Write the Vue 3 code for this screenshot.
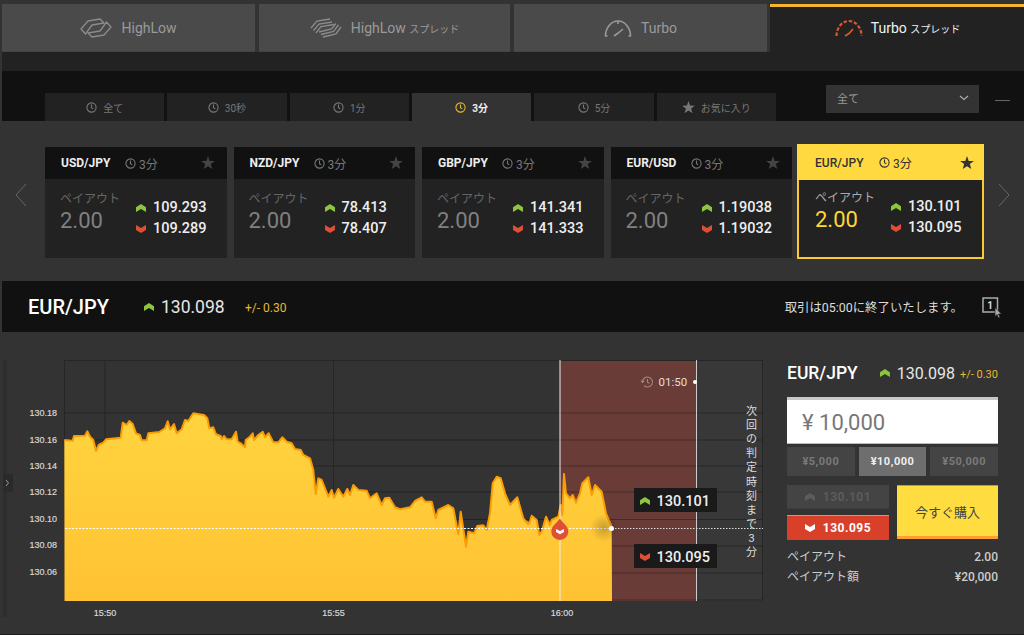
<script setup>
const up = 'M0 3.2 5 0l5 3.2V8L5 5 0 8Z'
const down = 'M0 0l5 3 5-3v5L5 8 0 5Z'
const star = 'M7 0l1.7 4.9 5.2.1-4.1 3.1 1.5 5L7 10.2 2.7 13.1l1.5-5L.1 5l5.2-.1Z'

const subTabs = [
  { label: '全て' }, { label: '30秒' }, { label: '1分' },
  { label: '3分', active: true }, { label: '5分' }, { label: 'お気に入り', fav: true }
]
const cards = [
  { pair: 'USD/JPY', hi: '109.293', lo: '109.289' },
  { pair: 'NZD/JPY', hi: '78.413', lo: '78.407' },
  { pair: 'GBP/JPY', hi: '141.341', lo: '141.333' },
  { pair: 'EUR/USD', hi: '1.19038', lo: '1.19032' },
  { pair: 'EUR/JPY', hi: '130.101', lo: '130.095', active: true }
]
const amounts = [
  { label: '¥5,000' }, { label: '¥10,000', active: true }, { label: '¥50,000' }
]

const seg1 = [193,270,218,272,222,258,255,257,262,244,270,260,280,270,288,303,296,285,310,278,318,268,362,263,368,218,380,225,388,213,398,222,408,250,420,255,425,271,440,271,445,250,478,246,495,235,503,214,510,238,522,222,530,250,545,238,555,210,565,213,580,190,612,195,622,205,628,235,640,232,648,253,662,258,665,268,672,258,680,268,695,268,708,245,713,275,722,280,735,292,737,270,748,262,758,250,762,270,775,255,788,245,795,262,806,250]
const seg2 = [0,108,10,127,25,127,37,112,50,125,65,130,75,147,92,150,100,165,120,175,130,210,137,282,145,235,155,240,175,290,185,270,192,293,205,267,220,290,232,267,240,285,250,255,265,270,290,272,300,295,320,280,335,315,345,295,358,293,375,322,390,328,420,322,435,303,455,292,465,305,485,305,497,355,505,330,535,315,550,325,565,403,572,335,588,440,595,395,612,400,622,378,640,376,650,390,660,340,668,250,680,230,692,235,705,280,720,315,742,292,760,355,775,372]
const seg3 = [15,512,28,520,35,497,50,510,58,555,65,545,78,500,90,525,95,510,115,500,122,465,127,495,132,372,138,430,150,445,158,435,168,458,180,430,187,400,205,382,215,435,225,405,245,425,258,490,275,530]
const pts = []
for (let i = 0; i < seg1.length; i += 2) pts.push([seg1[i] / 3, 350 + seg1[i + 1] / 3])
for (let i = 0; i < seg2.length; i += 2) pts.push([270 + seg2[i] / 3, 400 + seg2[i + 1] / 3])
for (let i = 0; i < seg3.length; i += 2) pts.push([520 + seg3[i] / 3, 350 + seg3[i + 1] / 3])
const line = pts.map(p => p[0].toFixed(1) + ',' + p[1].toFixed(1)).join(' ')
const area = '64.5,601 ' + line + ' 612,601'

const gridY = [413, 440, 466, 492, 519.5, 546, 573, 600]
const labels = [
  ['130.18', 416], ['130.16', 443], ['130.14', 469], ['130.12', 495],
  ['130.10', 522], ['130.08', 548], ['130.06', 575]
]
const times = [['15:50', 105], ['15:55', 333.5], ['16:00', 562]]
const vertical = ['次', '回', 'の', '判', '定', '時', '刻', 'ま', 'で', '3', '分']
</script>

<template>
  <div class="page">
    <nav class="top-tabs">
      <div class="top-tab">
        <svg class="ic" width="32" height="20" viewBox="0 0 32 20" fill="none" stroke="#8c8c8c" stroke-width="1.300" stroke-linejoin="round">
          <path d="M5.500 16 1 11l7-8 12-2 4 4-12 2Z" />
          <path d="M26.500 4 31 9l-7 8-12 2-4-4 12-2Z" />
        </svg>
        <span>HighLow</span>
      </div>
      <div class="top-tab">
        <svg class="ic" width="32" height="20" viewBox="0 0 32 20" fill="none" stroke="#8c8c8c" stroke-width="1.300">
          <path d="M1 10 7 3 20 1M3.500 12.500 9 6 22 4M6 15l5-6.500 13-2" />
          <path d="M31 9l-5 7-13 3M28.500 7l-5 6.500L11 16.500M26 5.500 21.500 11 9 14" />
        </svg>
        <span>HighLow <small>スプレッド</small></span>
      </div>
      <div class="top-tab">
        <svg class="ic" width="28" height="18" viewBox="0 0 28 18" fill="none" stroke="#999" stroke-width="1.600">
          <path d="M3.500 17H1.500C1.500 9 7 2 14 2s12.500 7 12.500 15h-2" />
          <path d="M14 2v3M19 10l-5.500 4.500L10 17" />
        </svg>
        <span>Turbo</span>
      </div>
      <div class="top-tab on">
        <svg class="ic" width="28" height="18" viewBox="0 0 28 18" fill="none" stroke="#e2562c" stroke-width="2.200">
          <path d="M1.500 17C1.500 9 7 2 14 2s12.500 7 12.500 15" stroke-dasharray="3.500 1.800" />
          <path d="M18 10l-4 4.500-4 2.500" stroke-width="1.700" />
        </svg>
        <span>Turbo <small>スプレッド</small></span>
      </div>
    </nav>

    <div class="spacer"></div>

    <div class="filter-bar">
      <div class="sub-tabs">
        <div v-for="t in subTabs" :key="t.label" class="sub-tab" :class="{ on: t.active }">
          <svg v-if="t.fav" width="13" height="13" viewBox="0 0 14 14"><path :d="star" fill="#777" /></svg>
          <svg v-else width="11" height="11" viewBox="0 0 12 12" fill="none" :stroke="t.active ? '#e8b62c' : '#777'" stroke-width="1.200">
            <circle cx="6" cy="6" r="5" /><path d="M6 2.800V6.300L8 7.500" />
          </svg>
          <span>{{ t.label }}</span>
        </div>
      </div>
      <div class="select">
        <span>全て</span>
        <svg width="10" height="6" viewBox="0 0 10 6" fill="none" stroke="#aaa" stroke-width="1.300"><path d="M1 1l4 3.500L9 1" /></svg>
      </div>
      <div class="dash"></div>
    </div>

    <section class="cards">
      <svg class="nav-arrow" width="12" height="24" viewBox="0 0 12 24" fill="none" stroke="#666" stroke-width="1"><path d="M11 1 1 12l10 11" /></svg>
      <div class="card-row">
        <article v-for="c in cards" :key="c.pair" class="card" :class="{ on: c.active }">
          <header class="card-head">
            <b class="pair">{{ c.pair }}</b>
            <span class="dur">
              <svg width="11" height="11" viewBox="0 0 12 12" fill="none" stroke="currentColor" stroke-width="1.200">
                <circle cx="6" cy="6" r="5" /><path d="M6 2.800V6.300L8 7.500" />
              </svg>
              3分
            </span>
            <svg class="star" width="14" height="14" viewBox="0 0 14 14"><path :d="star" /></svg>
          </header>
          <div class="card-body">
            <div class="payout">
              <div class="payout-label">ペイアウト</div>
              <div class="payout-value">2.00</div>
            </div>
            <div class="prices">
              <div class="price"><svg width="10" height="8" viewBox="0 0 10 8"><path :d="up" fill="#8cc63f" /></svg>{{ c.hi }}</div>
              <div class="price"><svg width="10" height="8" viewBox="0 0 10 8"><path :d="down" fill="#e04e35" /></svg>{{ c.lo }}</div>
            </div>
          </div>
        </article>
      </div>
      <svg class="nav-arrow" width="12" height="24" viewBox="0 0 12 24" fill="none" stroke="#666" stroke-width="1"><path d="M1 1l10 11L1 23" /></svg>
    </section>

    <section class="info">
      <h1>EUR/JPY</h1>
      <svg width="10" height="8" viewBox="0 0 10 8"><path :d="up" fill="#8cc63f" /></svg>
      <span class="info-rate">130.098</span>
      <span class="info-diff">+/- 0.30</span>
      <span class="info-end">取引は05:00に終了いたします。</span>
      <svg class="one-click" width="20" height="23" viewBox="0 0 20 23">
        <path d="M1 2h14.500v14H1Z" fill="none" stroke="#aaa" stroke-width="1.500" />
        <text x="8" y="13" text-anchor="middle" class="one-num">1</text>
        <path d="M13 11.500v9l2-2 1.500 3.500 1.500-.7-1.500-3.300h3Z" fill="#aaa" stroke="#111" stroke-width=".6" />
      </svg>
    </section>

    <section class="trade">
      <svg class="chart" width="770" height="303" viewBox="0 332 770 303">
        <defs>
          <linearGradient id="fillG" x1="0" y1="0" x2="0" y2="1">
            <stop offset="0" stop-color="#ffd43f" />
            <stop offset="1" stop-color="#ffc233" />
          </linearGradient>
          <radialGradient id="glow">
            <stop offset="0" stop-color="#000" stop-opacity=".22" />
            <stop offset="1" stop-color="#000" stop-opacity="0" />
          </radialGradient>
        </defs>
        <rect x="3" y="360" width="4" height="257" fill="#2d2d2d" />
        <rect x="3" y="474" width="10" height="18" fill="#2a2a2a" />
        <path d="M6 480l2.500 3-2.500 3" fill="none" stroke="#999" stroke-width="1" />

        <rect x="560" y="360" width="137" height="241" fill="#693c37" />
        <rect x="697" y="360" width="66" height="241" fill="#383838" />
        <path v-for="y in gridY" :key="y" :d="`M65 ${y}H763`" stroke="#000" stroke-opacity=".3" stroke-width="1" />
        <path d="M65 360.500H763M64.500 360V601M105 360V601M333.500 360V601M762.500 360V601" stroke="#262626" stroke-width="1" fill="none" />

        <polygon :points="area" fill="url(#fillG)" />
        <polyline :points="line" fill="none" stroke="#fb9c05" stroke-width="2" stroke-linejoin="round" />

        <path d="M560 360V601" stroke="#eee" stroke-width="1" />
        <path d="M696.500 360V601" stroke="#ccc" stroke-width="1" />
        <path d="M65 528.500H612" stroke="#fff" stroke-width="1.200" stroke-dasharray="2 1.500" />
        <path d="M612 528.500H763" stroke="#ddd" stroke-width="1" stroke-dasharray="1.500 1.500" />
        <circle cx="604" cy="528" r="14" fill="url(#glow)" />
        <circle cx="611.500" cy="528.500" r="2.500" fill="#fff" />

        <path d="M559.800 518.500c3 5 8.500 7.500 8.500 13a8.400 8.400 0 0 1-17 0c0-5.500 5.500-8 8.500-13Z" fill="#e04e35" />
        <path d="M556 529l4 2 4-2v3l-4 2.300-4-2.300Z" fill="#fff" />

        <g class="ax">
          <text v-for="l in labels" :key="l[0]" x="57" :y="l[1]" text-anchor="end">{{ l[0] }}</text>
          <text v-for="t in times" :key="t[0]" :x="t[1]" y="616" text-anchor="middle">{{ t[0] }}</text>
        </g>

        <g fill="none" stroke="#a88" stroke-width="1.100">
          <path d="M642.500 382a5 5 0 1 1 1.500 3.600M647.500 379v3.200l2 1.200" />
          <path d="M641 380.500l1.500 2 1.700-1.800" />
        </g>
        <text x="658.500" y="386" class="timer">01:50</text>
        <circle cx="695" cy="382" r="2" fill="#fff" />

        <rect x="634" y="488" width="83" height="24" fill="#1a1a1a" />
        <path :d="up" fill="#8cc63f" transform="translate(640 497)" />
        <text x="656.500" y="505.500" class="tip">130.101</text>
        <rect x="634" y="544" width="83" height="24" fill="#1a1a1a" />
        <path :d="down" fill="#e04e35" transform="translate(640 553)" />
        <text x="656.500" y="561.500" class="tip">130.095</text>

        <text v-for="(c, i) in vertical" :key="i" x="751.500" :y="415 + i * 14.100" text-anchor="middle" class="vert">{{ c }}</text>
      </svg>

      <aside class="panel">
        <div class="panel-head">
          <h2>EUR/JPY</h2>
          <svg width="10" height="8" viewBox="0 0 10 8"><path :d="up" fill="#8cc63f" /></svg>
          <span class="panel-rate">130.098</span>
          <span class="panel-diff">+/- 0.30</span>
        </div>
        <div class="amount-input">¥ 10,000</div>
        <div class="amounts">
          <div v-for="a in amounts" :key="a.label" class="amount" :class="{ on: a.active }">{{ a.label }}</div>
        </div>
        <div class="actions">
          <div class="dirs">
            <div class="dir hi">
              <svg width="10" height="8" viewBox="0 0 10 8"><path :d="up" fill="#5c5c5c" /></svg>130.101
            </div>
            <div class="dir lo">
              <svg width="10" height="8" viewBox="0 0 10 8"><path :d="down" fill="#fff" /></svg>130.095
            </div>
          </div>
          <div class="buy">今すぐ購入</div>
        </div>
        <div class="row"><span>ペイアウト</span><b>2.00</b></div>
        <div class="row"><span>ペイアウト額</span><b>¥20,000</b></div>
      </aside>
    </section>
  </div>
</template>

<style>
html, body { margin: 0; background: #333; }
</style>

<style scoped>
.page {
  width: 1024px;
  height: 635px;
  overflow: hidden;
  background: #333;
  border-bottom: 1px solid #1e1e1e;
  box-sizing: border-box;
  font-family: Roboto, "Noto Sans CJK JP", sans-serif;
  color: #fff;
}
.top-tabs {
  display: grid;
  grid-template-columns: 253px 251px 253px 254px;
  column-gap: 4px;
  padding: 4px 0 0 2px;
  height: 52px;
  box-sizing: border-box;
}
.top-tab {
  display: flex;
  align-items: center;
  justify-content: center;
  gap: 9px;
  background: #4a4a4a;
  color: #9a9a9a;
  font-size: 14px;
  box-shadow: inset 0 -1px 0 #444;
}
.top-tab small { font-size: 10px; }
.top-tab.on {
  background: #222;
  color: #f2f2f2;
  border-top: 3px solid #f5b52c;
  margin-left: -1px;
  padding-bottom: 3px;
  box-shadow: none;
  gap: 8px;
}
.spacer { height: 19px; margin-left: 2px; background: #222; }
.filter-bar {
  height: 50px;
  margin-left: 2px;
  background: #111;
  display: flex;
}
.sub-tabs {
  display: flex;
  gap: 3px;
  margin: 22px 0 0 43px;
  height: 28px;
  width: 731px;
}
.sub-tab {
  flex: 1;
  display: flex;
  align-items: center;
  justify-content: center;
  gap: 6px;
  background: #222;
  color: #777;
  font-size: 10px;
}
.sub-tab.on { background: #333; color: #eee; font-weight: 700; }
.select {
  width: 153px;
  height: 28px;
  margin: 14px 0 0 50px;
  box-sizing: border-box;
  padding: 0 10px 2px 11px;
  background: #333;
  color: #999;
  font-size: 11px;
  display: flex;
  align-items: center;
  justify-content: space-between;
}
.dash { width: 15px; height: 1px; background: #666; margin: 29px 0 0 16px; }
.cards {
  height: 160px;
  margin-left: 2px;
  display: flex;
  align-items: flex-start;
  box-sizing: border-box;
  padding-top: 26px;
  background: #333;
}
.nav-arrow { margin: 36px 0 0 13px; flex: none; }
.cards .nav-arrow:last-child { margin-left: 14px; }
.card-row { display: flex; margin-left: 18px; }
.card {
  width: 181.500px;
  margin-right: 7px;
  height: 111px;
  background: #222;
  display: flex;
  flex-direction: column;
}
.card-head {
  height: 32px;
  background: #111;
  display: flex;
  align-items: center;
  padding: 0 12px 0 16px;
  flex: none;
}
.pair { font-size: 12px; color: #eee; width: 64px; font-weight: 700; }
.dur { font-size: 12px; color: #777; display: flex; align-items: center; gap: 3px; }
.star { margin-left: auto; fill: #444; }
.card-body { display: flex; padding: 12px 0 0 15px; }
.payout { width: 76px; }
.payout-label { font-size: 12px; color: #666; line-height: 16px; }
.payout-value { font-size: 22px; color: #808080; line-height: 26px; margin-top: 1px; }
.prices { padding-top: 6px; }
.price {
  display: flex;
  align-items: center;
  gap: 7px;
  font-size: 14.500px;
  font-weight: 500;
  line-height: 21px;
  color: #eee;
}
.card.on {
  width: 187px;
  height: 115px;
  margin: -3px 0 0 -2px;
  background: #222;
  border: 2px solid #fcc933;
  border-top: 0;
  box-sizing: border-box;
}
.card.on .card-head { background: #ffd93f; height: 35px; padding: 1px 10px 0 18px; margin: 0 -2px; }
.card.on .pair { color: #333; font-weight: 500; width: 64px; }
.card.on .dur { color: #333; }
.card.on .star { fill: #333; }
.card.on .card-body { padding-left: 16px; padding-top: 10px; }
.card.on .payout-label { color: #aaa; }
.card.on .payout-value { color: #fdd835; }
.info {
  height: 51px;
  margin-left: 2px;
  background: #111;
  display: flex;
  align-items: center;
}
.info h1 { margin: 0 0 0 26px; font-size: 20px; font-weight: 500; width: 116px; }
.info-rate { font-size: 17.500px; color: #e6e6e6; margin-left: 7px; width: 84px; }
.info-diff { font-size: 12px; color: #e5b92c; margin-top: 2px; }
.info-end { margin-left: auto; font-size: 12.400px; color: #ddd; }
.one-click { margin: 2px 22px 0 19px; }
.one-num { font: 700 10px Roboto, sans-serif; fill: #ddd; }
.trade { display: flex; height: 302px; }
.chart { display: block; flex: none; }
.ax text { font: 9px "Liberation Sans", Arial, sans-serif; fill: #ddd; stroke: #ccc; stroke-width: .2px; }
.timer { font: 11.500px Roboto, sans-serif; fill: #e6dcdc; }
.tip { font: 500 14.500px Roboto, sans-serif; fill: #eee; }
.vert { font: 11px Roboto, "Noto Sans CJK JP", sans-serif; fill: #ddd; }
.panel {
  width: 211px;
  margin-left: 17px;
  padding-top: 31px;
  font-size: 12px;
}
.panel-head { display: flex; align-items: center; height: 20px; }
.panel-head h2 { margin: 0; font-size: 17.500px; font-weight: 500; width: 94px; }
.panel-rate { font-size: 16px; color: #e6e6e6; margin-left: 7px; width: 64px; }
.panel-diff { font-size: 11px; color: #e5b92c; margin-top: 3px; white-space: nowrap; }
.amount-input {
  margin-top: 14px;
  height: 47px;
  box-sizing: border-box;
  border-top: 3px solid #c8c8c8;
  border-bottom: 1px solid #bbb;
  background: #fff;
  color: #777;
  font-size: 22px;
  padding: 1px 0 0 15px;
  display: flex;
  align-items: center;
}
.amounts { display: grid; grid-template-columns: repeat(3, 1fr); gap: 4px; margin-top: 3px; }
.amount {
  height: 29px;
  background: #444;
  color: #7a7a7a;
  font-size: 11px;
  font-weight: 700;
  letter-spacing: .5px;
  display: flex;
  align-items: center;
  justify-content: center;
}
.amount.on { background: #6e6e6e; color: #eee; }
.actions { display: flex; justify-content: space-between; margin-top: 9px; }
.dirs { width: 102px; display: flex; flex-direction: column; gap: 6px; }
.dir {
  height: 25px;
  display: flex;
  align-items: center;
  justify-content: center;
  gap: 8px;
  font-size: 12px;
  font-weight: 700;
  letter-spacing: .5px;
}
.dir.hi { background: #444; color: #5c5c5c; box-shadow: inset 0 -1px 0 #3c3c3c; height: 24px; }
.dir.lo { background: #d9402a; color: #fff; border-top: 1px solid #f08a70; box-sizing: border-box; }
.buy {
  width: 101px;
  height: 54px;
  box-sizing: border-box;
  background: #ffdc40;
  border-top: 1px solid #b8a030;
  border-bottom: 3px solid #ff9f33;
  color: #444;
  font-size: 13px;
  display: flex;
  align-items: center;
  justify-content: center;
}
.row {
  display: flex;
  justify-content: space-between;
  line-height: 20px;
  color: #ccc;
  font-size: 12px;
}
.actions + .row { margin-top: 7px; }
.row b { font-weight: 500; }
</style>
